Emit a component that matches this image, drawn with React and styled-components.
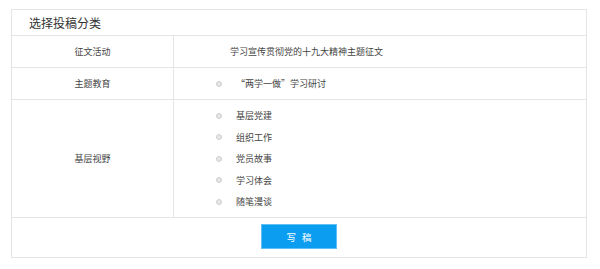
import React from "react";
import styled, { createGlobalStyle } from "styled-components";

const Global = createGlobalStyle`
  html, body { margin: 0; padding: 0; background: #fff; }
  body { font-family: "Noto Sans CJK SC", "Liberation Sans", sans-serif; color: #333; }
`;

const Panel = styled.div`
  box-sizing: border-box;
  width: 576px;
  margin: 9px 0 0 11px;
  border: 1px solid #e5e5e5;
`;

const Header = styled.div`
  box-sizing: border-box;
  height: 26px;
  border-bottom: 1px solid #e5e5e5;
  padding-left: 17px;
  font-size: 12px;
  line-height: 25px;
  color: #333;
`;

const Row = styled.div`
  display: grid;
  grid-template-columns: 162px 1fr;
  box-sizing: border-box;
  height: ${(p) => p.$h}px;
  border-bottom: 1px solid #e5e5e5;
`;

const Label = styled.div`
  box-sizing: border-box;
  border-right: 1px solid #e5e5e5;
  display: flex;
  align-items: center;
  justify-content: center;
  font-size: 9px;
  color: #444;
`;

const Cell = styled.div`
  display: flex;
  flex-direction: column;
  justify-content: center;
  padding-left: ${(p) => p.$pad}px;
  font-size: 9px;
  color: #444;
`;

const Option = styled.label`
  display: flex;
  align-items: center;
  height: 21.5px;
  gap: 14px;
`;

const Dot = styled.span`
  box-sizing: border-box;
  width: 6px;
  height: 6px;
  border-radius: 50%;
  background: #e6e6e6;
  border: 1px solid #cfcfcf;
  flex: none;
`;

const Footer = styled.div`
  display: flex;
  justify-content: center;
  padding: 6px 0 8px;
`;

const Button = styled.button`
  box-sizing: border-box;
  width: 76px;
  height: 25px;
  border: 1px solid #5fc0f5;
  background: #0a9df0;
  color: #fff;
  font-family: inherit;
  font-size: 9.5px;
  letter-spacing: 6px;
  padding: 0 0 0 6px;
  cursor: pointer;
`;

const Opt = ({ children }) => (
  <Option>
    <Dot />
    <span>{children}</span>
  </Option>
);

export default function App() {
  return (
    <>
      <Global />
      <Panel>
        <Header>选择投稿分类</Header>
        <Row $h={32}>
          <Label>征文活动</Label>
          <Cell $pad={56}>学习宣传贯彻党的十九大精神主题征文</Cell>
        </Row>
        <Row $h={32}>
          <Label>主题教育</Label>
          <Cell $pad={42}>
            <Opt>“两学一做”学习研讨</Opt>
          </Cell>
        </Row>
        <Row $h={118}>
          <Label>基层视野</Label>
          <Cell $pad={42}>
            <Opt>基层党建</Opt>
            <Opt>组织工作</Opt>
            <Opt>党员故事</Opt>
            <Opt>学习体会</Opt>
            <Opt>随笔漫谈</Opt>
          </Cell>
        </Row>
        <Footer>
          <Button>写稿</Button>
        </Footer>
      </Panel>
    </>
  );
}
